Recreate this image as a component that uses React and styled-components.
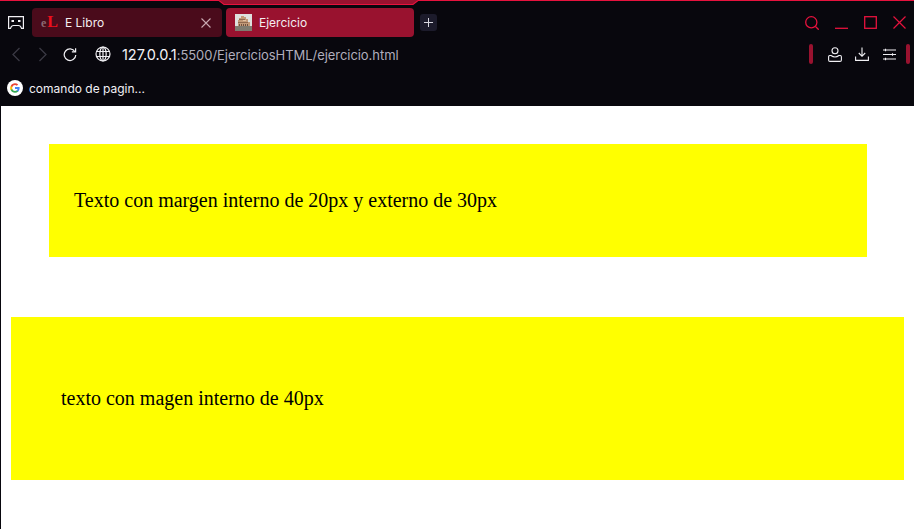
import React from 'react';
import styled, { createGlobalStyle } from 'styled-components';

const GlobalStyles = createGlobalStyle`
  html, body {
    margin: 0;
    padding: 0;
    background: #fff;
    overflow: hidden;
  }
`;

const Window = styled.div`
  width: 914px;
  height: 529px;
  display: flex;
  flex-direction: column;
  overflow: hidden;
`;

const Chrome = styled.header`
  position: relative;
  height: 106px;
  flex: none;
  background: #08070d;
  font-family: Inter, "Liberation Sans", sans-serif;
`;

const Accent = styled.svg`
  position: absolute;
  left: 0;
  top: 0;
`;

const TabRow = styled.div`
  height: 37px;
  box-sizing: border-box;
  padding: 8px 0 0 8px;
  display: flex;
  align-items: flex-start;
`;

const GameBtn = styled.div`
  width: 16px;
  height: 29px;
  margin-right: 8px;
  display: flex;
  align-items: center;
`;

const Tab = styled.div`
  width: ${p => p.$w}px;
  height: 29px;
  margin-right: 4px;
  box-sizing: border-box;
  padding: 0 11px 0 9px;
  display: flex;
  align-items: center;
  border-radius: 4px;
  background: ${p => (p.$active ? '#99122f' : '#4a0b1b')};
  color: #f4eef0;
  font-size: 12px;
`;

const TabIcon = styled.div`
  width: 17px;
  height: 17px;
  margin-right: 7px;
  flex: none;
  display: flex;
  align-items: center;
`;

const Logo = styled.span`
  font-family: "Liberation Serif", serif;
  font-weight: bold;
  line-height: 17px;
  white-space: nowrap;
`;

const LogoE = styled.span`
  font-size: 12px;
  color: #8c6a72;
`;

const LogoL = styled.span`
  font-size: 16px;
  margin-left: 1px;
  color: #ee0f1c;
`;

const TabTitle = styled.span`
  flex: 1;
`;

const PlusBtn = styled.div`
  width: 17px;
  height: 17px;
  margin: 6px 0 0 2px;
  border-radius: 3px;
  background: #1c1b2b;
  display: flex;
  align-items: center;
  justify-content: center;
`;

const WinControls = styled.div`
  margin-left: auto;
  height: 29px;
  padding-right: 8px;
  display: flex;
  align-items: center;
  gap: 16px;
`;

const AddressRow = styled.div`
  height: 34px;
  box-sizing: border-box;
  padding-left: 9px;
  display: flex;
  align-items: center;
`;

const NavIcon = styled.div`
  width: ${p => p.$w || 16}px;
  height: 16px;
  margin-right: ${p => p.$mr || 0}px;
  display: flex;
  align-items: center;
  justify-content: center;
`;

const Url = styled.div`
  font-size: 13px;
  color: #b0aebc;
  letter-spacing: -0.05px;
  white-space: nowrap;
`;

const Host = styled.span`
  font-size: 14.5px;
  color: #f4f3f7;
`;

const Tools = styled.div`
  margin-left: auto;
  padding-right: 4px;
  display: flex;
  align-items: center;
`;

const Pill = styled.div`
  width: 4px;
  height: 20px;
  margin-left: ${p => p.$ml || 0}px;
  border-radius: 2px;
  background: #99122f;
`;

const ToolIcon = styled.div`
  width: 16px;
  height: 16px;
  margin-left: ${p => p.$ml || 0}px;
  display: flex;
  align-items: center;
  justify-content: center;
`;

const BookmarkRow = styled.div`
  height: 35px;
  box-sizing: border-box;
  padding: 0 0 1px 7px;
  display: flex;
  align-items: center;
  gap: 6px;
  color: #f1f0f4;
  font-size: 12px;
`;

const Page = styled.main`
  flex: 1;
  border-left: 1px solid #08070d;
  font-family: "Liberation Serif", "Times New Roman", serif;
  font-size: 20px;
  color: #000;
`;

const Box = styled.div`
  background: #ff0;
  box-sizing: border-box;
  height: ${p => p.$h}px;
  margin: ${p => p.$margin};
  padding-left: ${p => p.$pad}px;
  display: flex;
  align-items: center;
`;

// miniatura de la pestaña: el coliseo visto de lado
const Colosseum = () => (
  <svg width="17" height="17" viewBox="0 0 17 17" shapeRendering="crispEdges">
    <rect width="17" height="17" fill="#dfe0de" />
    <rect y="12" width="17" height="5" fill="#7f7b70" />
    <path d="M3 12V6H4V4H6V2H9V3H11V5H13V8H15V12Z" fill="#c39a78" />
    <path d="M4 5h6v1H4zM3 8h10v1H3z" fill="#8f6a50" />
    <path d="M4 10h1v2H4zM6 10h1v2H6zM8 10h1v2H8zM10 10h1v2h-1zM12 10h1v2h-1z" fill="#6e5140" />
    <rect x="8" y="6" width="3" height="1" fill="#e3c3a3" />
  </svg>
);

const GoogleG = () => (
  <svg width="16" height="16" viewBox="0 0 16 16">
    <circle cx="8" cy="8" r="8" fill="#fff" />
    <path d="M12.600 8.100c0-.4 0-.7-.1-1H8v1.900h2.600c-.1.6-.5 1.100-1 1.500v1.200h1.600c.9-.9 1.400-2.100 1.400-3.600z" fill="#4285f4" />
    <path d="M8 12.800c1.300 0 2.400-.4 3.200-1.200L9.600 10.400c-.4.3-1 .5-1.600.5-1.200 0-2.300-.8-2.700-2H3.700v1.200C4.500 11.800 6.100 12.800 8 12.800z" fill="#34a853" />
    <path d="M5.300 8.900c-.2-.6-.2-1.200 0-1.800V5.900H3.700c-.7 1.300-.7 2.900 0 4.200z" fill="#fbbc05" />
    <path d="M8 5.100c.7 0 1.300.2 1.800.7l1.400-1.400C10.300 3.600 9.200 3.200 8 3.200c-1.900 0-3.500 1-4.300 2.700l1.600 1.200c.4-1.200 1.500-2 2.700-2z" fill="#ea4335" />
  </svg>
);

export default function App() {
  const red = '#e6123d';
  return (
    <Window>
      <GlobalStyles />
      <Chrome>
        <Accent width="914" height="8" viewBox="0 0 914 8">
          <path d="M219 0L224 4.500H413L418 0Z" fill="#99122f" />
          <path d="M0 .5H219L224 4.500H413L418 .5H914" fill="none" stroke={red} strokeWidth="1.200" />
        </Accent>
        <TabRow>
          <GameBtn>
            <svg width="16" height="13" viewBox="0 0 16 13" fill="none" stroke="#f1f0f4" strokeWidth="1.200">
              <path d="M.6 .6H15.400V12.400H13.500Q12.500 9.500 10.500 9.500H5.500Q3.500 9.500 2.500 12.400H.6Z" />
              <path d="M3.500 5H6M10 5H12.500" strokeWidth="2" />
            </svg>
          </GameBtn>
          <Tab $w={190}>
            <TabIcon>
              <Logo><LogoE>e</LogoE><LogoL>L</LogoL></Logo>
            </TabIcon>
            <TabTitle>E Libro</TabTitle>
            <svg width="10" height="10" viewBox="0 0 10 10" stroke="#c9a8b0" strokeWidth="1.100">
              <path d="M.5 .5L9.500 9.500M9.500 .5L.5 9.500" />
            </svg>
          </Tab>
          <Tab $w={188} $active>
            <TabIcon><Colosseum /></TabIcon>
            <TabTitle>Ejercicio</TabTitle>
          </Tab>
          <PlusBtn>
            <svg width="9" height="9" viewBox="0 0 9 9" stroke="#d8d7e0" strokeWidth="1">
              <path d="M4.500 0V9M0 4.500H9" />
            </svg>
          </PlusBtn>
          <WinControls>
            <svg width="14" height="14" viewBox="0 0 14 14" fill="none" stroke={red} strokeWidth="1.300">
              <circle cx="6.300" cy="6.300" r="5.600" />
              <path d="M10.500 10.500L13.700 13.700" />
            </svg>
            <svg width="13" height="13" viewBox="0 0 13 13" stroke={red} strokeWidth="1.300">
              <path d="M0 12.300H13" />
            </svg>
            <svg width="13" height="13" viewBox="0 0 13 13" fill="none" stroke={red} strokeWidth="1.300">
              <rect x=".7" y=".7" width="11.600" height="11.600" />
            </svg>
            <svg width="13" height="13" viewBox="0 0 13 13" stroke={red} strokeWidth="1.200">
              <path d="M.5 .5L12.500 12.500M12.500 .5L.5 12.500" />
            </svg>
          </WinControls>
        </TabRow>
        <AddressRow>
          <NavIcon $w={14} $mr={13}>
            <svg width="10" height="15" viewBox="0 0 10 15" fill="none" stroke="#3a3944" strokeWidth="1.300">
              <path d="M8.500 1L2 7.500L8.500 14" />
            </svg>
          </NavIcon>
          <NavIcon $w={14} $mr={13}>
            <svg width="10" height="15" viewBox="0 0 10 15" fill="none" stroke="#3a3944" strokeWidth="1.300">
              <path d="M1.500 1L8 7.500L1.500 14" />
            </svg>
          </NavIcon>
          <NavIcon $w={14} $mr={18}>
            <svg width="15" height="15" viewBox="0 0 15 15" fill="none" stroke="#f1f0f4" strokeWidth="1.300">
              <path d="M12.800 4.500A6.200 6.200 0 1 0 13.700 8" />
              <path d="M13.500 .8V4.800H9.500" />
            </svg>
          </NavIcon>
          <NavIcon $w={16} $mr={11}>
            <svg width="16" height="16" viewBox="0 0 16 16" fill="none" stroke="#f1f0f4" strokeWidth="1.200">
              <circle cx="8" cy="8" r="7" />
              <ellipse cx="8" cy="8" rx="3.200" ry="7" />
              <path d="M1.500 5.500H14.500M1.500 10.500H14.500M8 1V15" />
            </svg>
          </NavIcon>
          <Url><Host>127.0.0.1</Host>:5500/EjerciciosHTML/ejercicio.html</Url>
          <Tools>
            <Pill />
            <ToolIcon $ml={14}>
              <svg width="14" height="15" viewBox="0 0 14 15" fill="none" stroke="#f1f0f4" strokeWidth="1.100">
                <circle cx="7" cy="3.800" r="3" />
                <path d="M3 8.500H1.800Q.6 8.500 .6 10V13Q.6 14.400 2 14.400H12Q13.400 14.400 13.400 13V10Q13.400 8.500 12.200 8.500H11Q9 10 7 10Q5 10 3 8.500Z" />
              </svg>
            </ToolIcon>
            <ToolIcon $ml={11}>
              <svg width="14" height="14" viewBox="0 0 14 14" fill="none" stroke="#f1f0f4" strokeWidth="1.100">
                <path d="M7 .5V9M3.800 6L7 9.300L10.200 6M.6 9.500V13.400H13.400V9.500" />
              </svg>
            </ToolIcon>
            <ToolIcon $ml={11}>
              <svg width="13" height="13" viewBox="0 0 13 13" stroke="#f1f0f4" strokeWidth="1.100" fill="#f1f0f4">
                <path d="M0 2H13M0 6.500H13M0 11H13" />
                <path d="M2.500 .8V3.200M9.500 5.300V7.700M2.500 9.800V12.200" />
              </svg>
            </ToolIcon>
            <Pill $ml={9} />
          </Tools>
        </AddressRow>
        <BookmarkRow>
          <GoogleG />
          comando de pagin...
        </BookmarkRow>
      </Chrome>
      <Page>
        <Box $h={113} $margin="38px 47px 0 48px" $pad={25}>
          Texto con margen interno de 20px y externo de 30px
        </Box>
        <Box $h={163} $margin="60px 10px 0 10px" $pad={50}>
          texto con magen interno de 40px
        </Box>
      </Page>
    </Window>
  );
}
